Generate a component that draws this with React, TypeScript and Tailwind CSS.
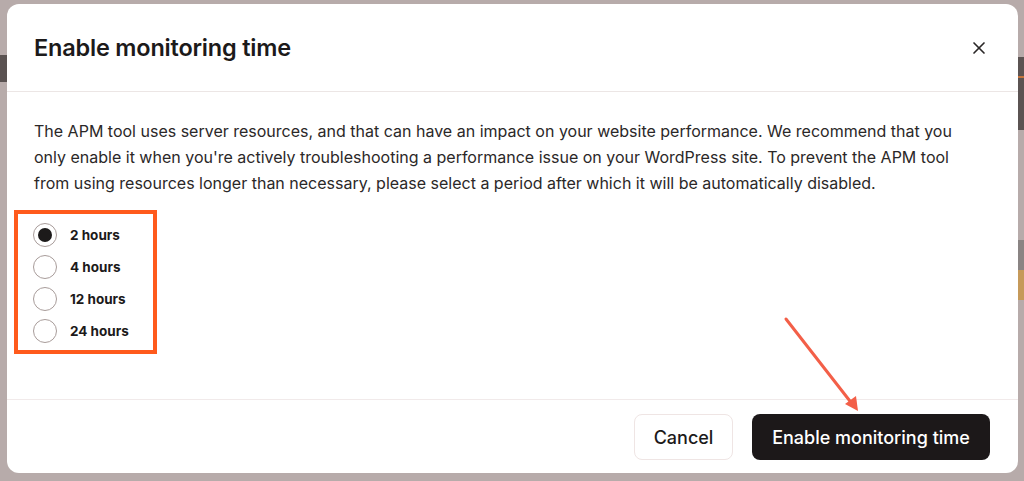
import { X } from "lucide-react";

const OPTIONS = ["2 hours", "4 hours", "12 hours", "24 hours"];

function Radio({ checked }: { checked: boolean }) {
  return (
    <span className="grid place-items-center w-[24px] h-[24px] rounded-full border border-[#a89c9a] bg-white">
      {checked && <span className="w-[14px] h-[14px] rounded-full bg-[#1c1a1a]" />}
    </span>
  );
}

export default function App() {
  return (
    <div
      className="relative h-[481px] w-[1024px] overflow-hidden bg-[#b7abaa] pt-[4px] pl-[7px] pr-[6px] pb-[8px]"
      style={{ fontFamily: "Inter, 'Noto Sans', sans-serif" }}
    >
      {/* page behind the backdrop */}
      <div className="absolute left-0 top-[55px] w-[7px] h-[27px] bg-[#5a5251]" />
      <div className="absolute right-0 top-[57px] w-[6px] h-[73px] bg-[#5b5352]" />
      <div className="absolute right-0 top-[76px] w-[6px] h-[2px] bg-[#c4743d]" />
      <div className="absolute right-0 top-[240px] w-[6px] h-[30px] bg-[#8a8483]" />
      <div className="absolute right-0 top-[270px] w-[6px] h-[30px] bg-[#c69a5a]" />

      <div className="relative flex h-full flex-col rounded-[12px] bg-white text-[#1c1a1a]">
        <div className="flex h-[88px] items-center justify-between border-b border-[#ece6e5] pl-[27px] pr-[29px]">
          <h1 className="text-[23.5px] font-semibold tracking-[-0.2px]">Enable monitoring time</h1>
          <X className="w-[20px] h-[20px] text-[#2a2727]" strokeWidth={2} />
        </div>

        <div className="flex-1 pl-[27px] pr-[30px] pt-[26px]">
          <p className="text-[16px] leading-[26px] text-[#2b2828]">
            The APM tool uses server resources, and that can have an impact on your website performance. We
            recommend that you only enable it when you're actively troubleshooting a performance issue on your
            WordPress site. To prevent the APM tool from using resources longer than necessary, please select a
            period after which it will be automatically disabled.
          </p>
          <div className="mt-[14px] -ml-[20px] w-[143px] border-4 border-[#ff5a1c] pt-[5px] pb-[3px] pl-[15px]">
            {OPTIONS.map((o, i) => (
              <div key={o} className="flex h-[32px] items-center gap-[13px]">
                <Radio checked={i === 0} />
                <span className="text-[13.5px] font-bold text-[#1c1a1a]">{o}</span>
              </div>
            ))}
          </div>
        </div>

        <div className="flex items-center justify-end gap-[19px] border-t border-[#f1eaea] pt-[14px] pb-[13px] pr-[28px]">
          <button className="h-[46px] w-[99px] rounded-[8px] border border-[#efe5e4] bg-white text-[18px] font-medium text-[#1c1a1a]">
            Cancel
          </button>
          <button className="h-[46px] w-[238px] rounded-[8px] bg-[#1c1819] text-[18px] font-medium text-white">
            Enable monitoring time
          </button>
        </div>
      </div>

      {/* annotation arrow */}
      <svg className="absolute left-0 top-0 pointer-events-none" width="1024" height="481">
        <line x1="786" y1="319" x2="853" y2="405" stroke="#f35f48" strokeWidth="3" strokeLinecap="round" />
        <path d="M858 411 L845 404 L856 396 Z" fill="#f35f48" />
      </svg>
    </div>
  );
}
